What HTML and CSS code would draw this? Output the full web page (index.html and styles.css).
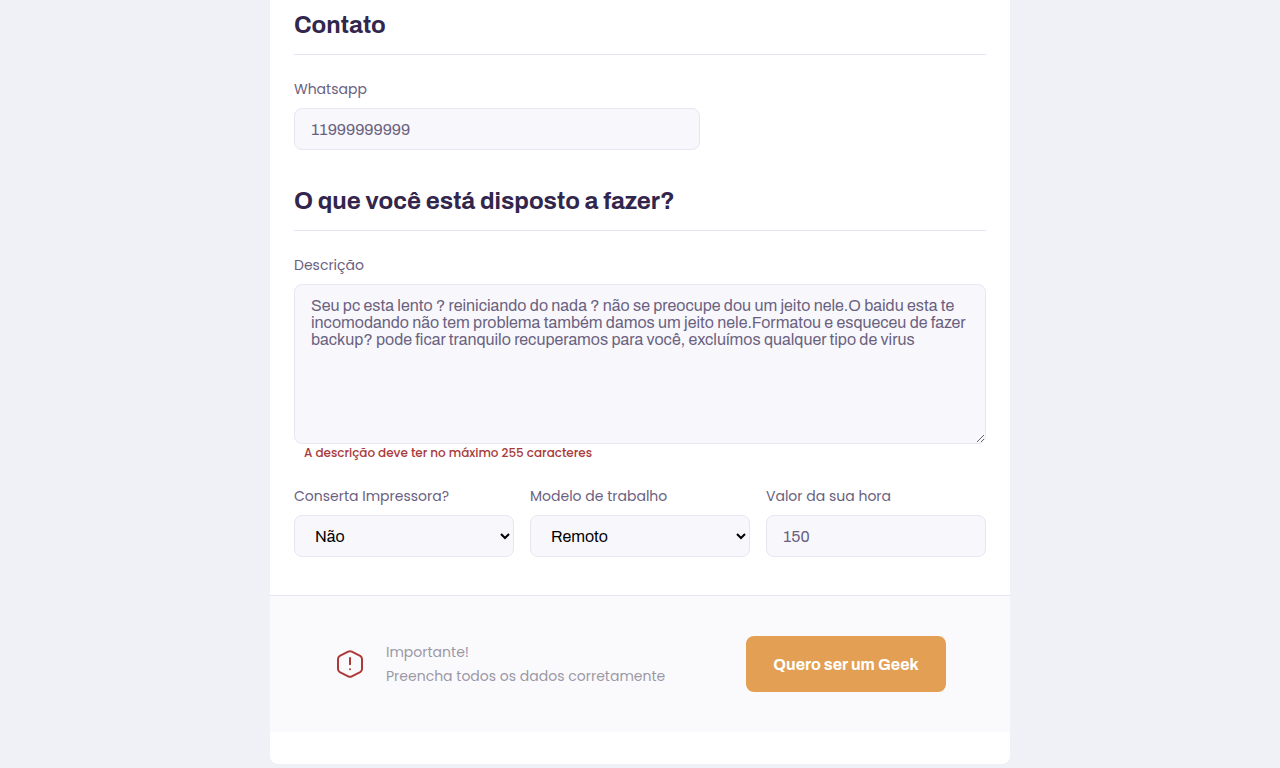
FILE: index.html
```html
<!DOCTYPE html>
<html lang="pt-BR">
<head>
<meta charset="utf-8">
<title>Quero ser um Geek</title>
<link rel="stylesheet" href="styles.css">
</head>
<body>
<main class="card">
  <form class="form">
    <fieldset>
      <h2 class="title">Contato</h2>
      <div class="field half">
        <label for="whatsapp">Whatsapp</label>
        <input id="whatsapp" type="text" value="11999999999">
      </div>
    </fieldset>
    <fieldset>
      <h2 class="title">O que você está disposto a fazer?</h2>
      <div class="field">
        <label for="bio">Descrição</label>
        <textarea id="bio" spellcheck="false">Seu pc esta lento ? reiniciando do nada ? não se preocupe dou um jeito nele.O baidu esta te
incomodando não tem problema também damos um jeito nele.Formatou e esqueceu de fazer
backup? pode ficar tranquilo recuperamos para você, excluímos qualquer tipo de virus</textarea>
        <p class="error">A descrição deve ter no máximo 255 caracteres</p>
      </div>
      <div class="row">
        <div class="field">
          <label for="printer">Conserta Impressora?</label>
          <select id="printer"><option>Não</option><option>Sim</option></select>
        </div>
        <div class="field">
          <label for="model">Modelo de trabalho</label>
          <select id="model"><option>Remoto</option><option>Presencial</option></select>
        </div>
        <div class="field">
          <label for="cost">Valor da sua hora</label>
          <input id="cost" type="text" value="150">
        </div>
      </div>
    </fieldset>
  </form>
  <footer class="footer">
    <div class="notice">
      <svg class="warn" width="28" height="28" viewBox="0 0 28 28" fill="none" stroke="#ae3838" stroke-width="2" stroke-linecap="round" stroke-linejoin="round">
        <path d="M12.2 1.6 3.8 5.9Q2 6.9 2 9v10q0 2.1 1.8 3.1l8.4 4.3q1.8.9 3.6 0l8.4-4.3q1.8-1 1.8-3.1V9q0-2.1-1.8-3.1l-8.4-4.3q-1.8-.9-3.6 0Z"/>
        <path d="M14 8v6.2M14 19.2v.1"/>
      </svg>
      <p>Importante!<br>Preencha todos os dados corretamente</p>
    </div>
    <button type="button">Quero ser um Geek</button>
  </footer>
</main>
</body>
</html>
```
FILE: styles.css
```css
* { margin: 0; padding: 0; box-sizing: border-box; }
body {
  height: 768px;
  overflow: hidden;
  background: #f0f0f7;
  color: #6a6180;
  font: 14px/24px Poppins, Inter, sans-serif;
}
.card {
  width: 740px;
  height: 764px;
  margin: 0 auto;
  padding-bottom: 32px;
  display: flex;
  flex-direction: column;
  background: #fff;
  border-radius: 0 0 8px 8px;
}
.form { flex: 1; padding: 8px 24px 0; }
fieldset { border: 0; }
fieldset + fieldset { margin-top: 34px; }
.title {
  height: 47px;
  margin-bottom: 22px;
  border-bottom: 1px solid #e6e6f0;
  color: #32264d;
  font: 700 24px/34px Archivo, "Liberation Sans", sans-serif;
}
.field { display: flex; flex-direction: column; }
.half { width: 406px; }
label { height: 24px; margin-bottom: 7px; white-space: nowrap; }
input, select, textarea {
  width: 100%;
  height: 42px;
  padding: 0 16px;
  border: 1px solid #e6e6f0;
  border-radius: 8px;
  background: #f8f8fc;
  color: #6a6180;
  font: 16px Archivo, "Liberation Sans", sans-serif;
  outline: 0;
}
select { padding-right: 0; border-right-width: 1px; color: #000; font-family: Archivo, "Liberation Sans", sans-serif; }
textarea { height: 160px; padding: 12px 0 0 16px; line-height: 17px; white-space: pre; overflow: auto; resize: vertical; }
.error {
  height: 18px;
  margin-left: 10px;
  color: #a93b3b;
  font-size: 12px;
  font-weight: 500;
  letter-spacing: -0.035px;
  line-height: 18px;
}
.row { display: grid; grid-template-columns: repeat(3, 1fr); gap: 16px; margin-top: 22px; }
.footer {
  height: 137px;
  padding: 0 64px;
  display: flex;
  align-items: center;
  justify-content: space-between;
  border-top: 1px solid #e6e6f0;
  background: #fafafc;
}
.notice { display: flex; align-items: center; gap: 22px; padding-left: 2px; color: #9c98a6; white-space: nowrap; }
.footer button {
  width: 200px;
  height: 56px;
  border: 0;
  border-radius: 8px;
  background: #e39f54;
  color: #fff;
  font: 700 16px Archivo, "Liberation Sans", sans-serif;
  white-space: nowrap;
}
```
